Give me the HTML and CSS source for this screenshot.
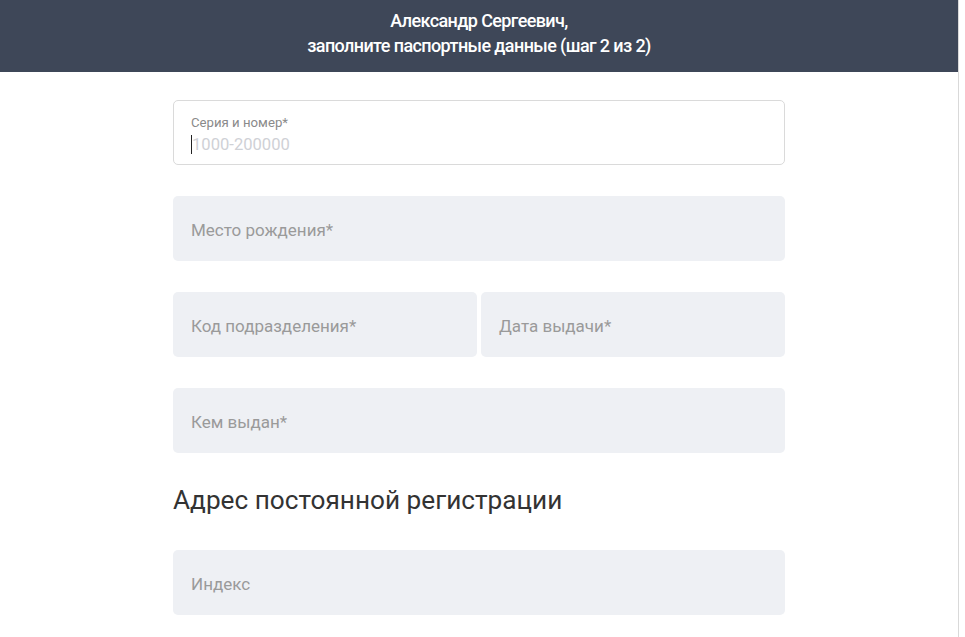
FILE: index.html
```html
<!DOCTYPE html>
<html lang="ru">
<head>
<meta charset="utf-8">
<link rel="stylesheet" href="styles.css">
</head>
<body>
<div class="page">
  <header class="top">
    <div class="top-line">Александр Сергеевич,</div>
    <div class="top-line">заполните паспортные данные (шаг 2 из 2)</div>
  </header>
  <main class="form">
    <div class="field field-active">
      <div class="field-label">Серия и номер*</div>
      <div class="field-input"><span class="caret"></span><span class="ph-light">1000-200000</span></div>
    </div>
    <div class="field field-empty"><span class="ph">Место рождения*</span></div>
    <div class="row">
      <div class="field field-empty"><span class="ph">Код подразделения*</span></div>
      <div class="field field-empty"><span class="ph">Дата выдачи*</span></div>
    </div>
    <div class="field field-empty"><span class="ph">Кем выдан*</span></div>
    <h2 class="section-title">Адрес постоянной регистрации</h2>
    <div class="field field-empty"><span class="ph">Индекс</span></div>
  </main>
</div>
</body>
</html>
```

FILE: styles.css
```css
html, body {
  margin: 0;
  padding: 0;
  background: #fff;
  font-family: Roboto, "Liberation Sans", Arial, sans-serif;
}
.page {
  width: 958px;
  min-height: 637px;
  border-right: 1px solid #d9d9d9;
}
.top {
  height: 72px;
  box-sizing: border-box;
  padding-top: 8px;
  background: #3e4758;
  color: #fff;
  text-align: center;
  font-size: 18px;
  font-weight: 500;
  line-height: 25px;
  letter-spacing: -0.6px;
}
.form {
  width: 612px;
  margin: 28px auto 0;
  display: flex;
  flex-direction: column;
  gap: 31px;
}
.field {
  height: 65px;
  box-sizing: border-box;
  border-radius: 5px;
  padding: 0 18px;
}
.field-active {
  border: 1px solid #dadada;
  padding: 14px 17px 0;
  background: #fff;
}
.field-label {
  font-size: 13.2px;
  line-height: 15px;
  color: #8a8a8a;
}
.field-input {
  margin-top: 4px;
  display: flex;
  align-items: center;
  height: 20px;
  font-size: 16.6px;
}
.caret {
  width: 1px;
  height: 19px;
  background: #222;
}
.ph-light {
  color: #cfd1d6;
}
.field-empty {
  background: #eef0f4;
  display: flex;
  align-items: center;
  padding-top: 3px;
}
.ph {
  font-size: 17px;
  color: #9a9a9a;
}
.row {
  display: grid;
  grid-template-columns: 1fr 1fr;
  gap: 4px;
}
.section-title {
  margin: 0;
  height: 35px;
  font-size: 26.2px;
  font-weight: 400;
  line-height: 32px;
  color: #333;
  letter-spacing: 0;
}
```
